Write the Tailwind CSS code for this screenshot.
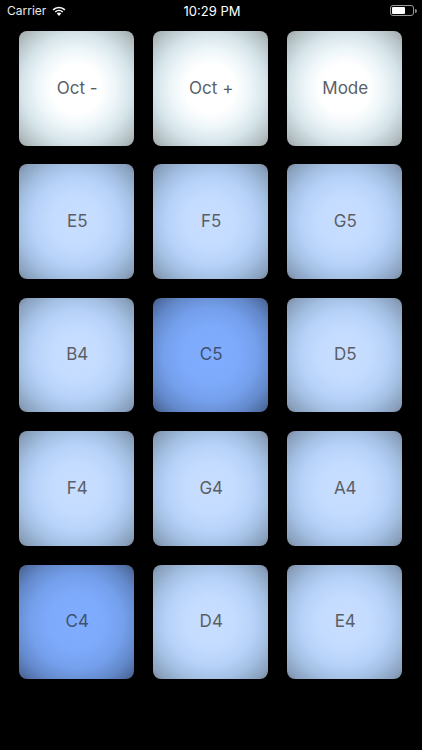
<!DOCTYPE html>
<html><head><meta charset="utf-8"><script src="https://cdn.jsdelivr.net/npm/@tailwindcss/browser@4"></script></head>
<body class="bg-black">
<div class="w-[422px] h-[750px] bg-black overflow-hidden font-['Inter','Liberation_Sans',sans-serif]">
  <div class="h-[31px] relative text-white text-[13px]">
    <div class="absolute left-[7px] top-[3px] flex items-center gap-[6px] text-[#e8e8e8] leading-[16px]"><span class="text-[12px]">Carrier</span>
      <svg width="14" height="10" viewBox="0 0 15 11"><path d="M7.5 11 L5 8.3 A3.6 3.6 0 0 1 10 8.3 Z" fill="#fff"/><path d="M3.4 6.6 A6 6 0 0 1 11.6 6.6" fill="none" stroke="#fff" stroke-width="1.8"/><path d="M1 4.2 A9.4 9.4 0 0 1 14 4.2" fill="none" stroke="#fff" stroke-width="1.8"/></svg>
    </div>
    <div class="absolute left-[2px] right-0 top-[3px] text-center font-normal leading-[16px]">10:29 PM</div>
    <div class="absolute left-[390px] top-[5px] flex items-center gap-[1px]">
      <div class="w-[24px] h-[11px] rounded-[3px] border border-[#999] p-[1px]"><div class="w-[13px] h-full bg-white rounded-[1px]"></div></div>
      <div class="w-[1.5px] h-[4px] bg-[#888] rounded-r"></div>
    </div>
  </div>
  <div class="grid grid-cols-[repeat(3,114.5px)] gap-x-[19.5px] gap-y-[18.9px] pl-[19px] text-[17px] text-[#5a5f66]">
    <div class="h-[114.5px] rounded-[8px] pl-[2px] flex items-center justify-center bg-[radial-gradient(circle_at_50%_50%,#ffffff_0%,#ffffff_30%,#eef6f9_48%,#d5e4e9_68%,#b9c6ca_85%,#a0a6a8_100%)]">Oct -</div>
    <div class="h-[114.5px] rounded-[8px] pl-[2px] flex items-center justify-center bg-[radial-gradient(circle_at_50%_50%,#ffffff_0%,#ffffff_30%,#eef6f9_48%,#d5e4e9_68%,#b9c6ca_85%,#a0a6a8_100%)]">Oct +</div>
    <div class="h-[114.5px] rounded-[8px] pl-[2px] flex items-center justify-center bg-[radial-gradient(circle_at_50%_50%,#ffffff_0%,#ffffff_30%,#eef6f9_48%,#d5e4e9_68%,#b9c6ca_85%,#a0a6a8_100%)]">Mode</div>
    <div class="h-[114.5px] rounded-[8px] pl-[2px] flex items-center justify-center bg-[radial-gradient(circle_at_50%_50%,#c8deff_0%,#c4dcff_30%,#b6d1f8_55%,#a3bfe2_72%,#8ba2c0_90%,#7a8798_100%)]">E5</div>
    <div class="h-[114.5px] rounded-[8px] pl-[2px] flex items-center justify-center bg-[radial-gradient(circle_at_50%_50%,#c8deff_0%,#c4dcff_30%,#b6d1f8_55%,#a3bfe2_72%,#8ba2c0_90%,#7a8798_100%)]">F5</div>
    <div class="h-[114.5px] rounded-[8px] pl-[2px] flex items-center justify-center bg-[radial-gradient(circle_at_50%_50%,#c8deff_0%,#c4dcff_30%,#b6d1f8_55%,#a3bfe2_72%,#8ba2c0_90%,#7a8798_100%)]">G5</div>
    <div class="h-[114.5px] rounded-[8px] pl-[2px] flex items-center justify-center bg-[radial-gradient(circle_at_50%_50%,#c8deff_0%,#c4dcff_30%,#b6d1f8_55%,#a3bfe2_72%,#8ba2c0_90%,#7a8798_100%)]">B4</div>
    <div class="h-[114.5px] rounded-[8px] pl-[2px] flex items-center justify-center text-[#3f5170] bg-[radial-gradient(circle_at_50%_50%,#80adff_0%,#7eaafc_35%,#749feb_58%,#6389cb_78%,#506ea3_92%,#46597f_100%)]">C5</div>
    <div class="h-[114.5px] rounded-[8px] pl-[2px] flex items-center justify-center bg-[radial-gradient(circle_at_50%_50%,#c8deff_0%,#c4dcff_30%,#b6d1f8_55%,#a3bfe2_72%,#8ba2c0_90%,#7a8798_100%)]">D5</div>
    <div class="h-[114.5px] rounded-[8px] pl-[2px] flex items-center justify-center bg-[radial-gradient(circle_at_50%_50%,#c8deff_0%,#c4dcff_30%,#b6d1f8_55%,#a3bfe2_72%,#8ba2c0_90%,#7a8798_100%)]">F4</div>
    <div class="h-[114.5px] rounded-[8px] pl-[2px] flex items-center justify-center bg-[radial-gradient(circle_at_50%_50%,#c8deff_0%,#c4dcff_30%,#b6d1f8_55%,#a3bfe2_72%,#8ba2c0_90%,#7a8798_100%)]">G4</div>
    <div class="h-[114.5px] rounded-[8px] pl-[2px] flex items-center justify-center bg-[radial-gradient(circle_at_50%_50%,#c8deff_0%,#c4dcff_30%,#b6d1f8_55%,#a3bfe2_72%,#8ba2c0_90%,#7a8798_100%)]">A4</div>
    <div class="h-[114.5px] rounded-[8px] pl-[2px] flex items-center justify-center text-[#3f5170] bg-[radial-gradient(circle_at_50%_50%,#80adff_0%,#7eaafc_35%,#749feb_58%,#6389cb_78%,#506ea3_92%,#46597f_100%)]">C4</div>
    <div class="h-[114.5px] rounded-[8px] pl-[2px] flex items-center justify-center bg-[radial-gradient(circle_at_50%_50%,#c8deff_0%,#c4dcff_30%,#b6d1f8_55%,#a3bfe2_72%,#8ba2c0_90%,#7a8798_100%)]">D4</div>
    <div class="h-[114.5px] rounded-[8px] pl-[2px] flex items-center justify-center bg-[radial-gradient(circle_at_50%_50%,#c8deff_0%,#c4dcff_30%,#b6d1f8_55%,#a3bfe2_72%,#8ba2c0_90%,#7a8798_100%)]">E4</div>
  </div>
</div>
</body></html>
